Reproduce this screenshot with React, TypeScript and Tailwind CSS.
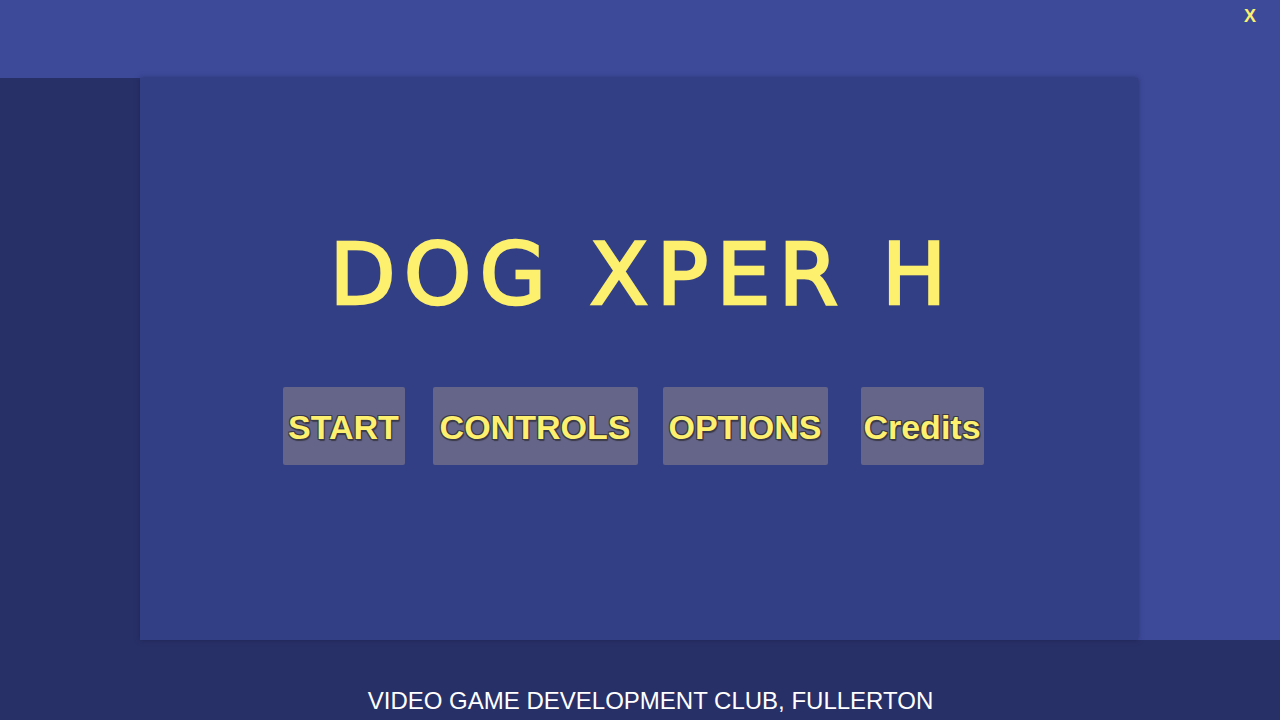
import React from 'react'

const buttons = [
  { label: 'START', w: 'w-[122px]', ml: 'ml-0' },
  { label: 'CONTROLS', w: 'w-[205px]', ml: 'ml-[28px]' },
  { label: 'OPTIONS', w: 'w-[165px]', ml: 'ml-[25px]' },
  { label: 'Credits', w: 'w-[123px]', ml: 'ml-[33px]' },
]

export default function App() {
  return (
    <div className="flex h-[720px] w-[1280px] flex-col overflow-hidden bg-[#283068] font-['Liberation_Sans',Arial,sans-serif]">
      <div className="relative h-[78px] w-full bg-[#3d4a9a]">
        <button className="absolute right-[24px] top-[3px] text-[18px] font-bold text-[#fdf06f]">X</button>
      </div>
      <div className="flex h-[562px] w-full">
        <div className="w-[140px] bg-[#283068]" />
        <div className="z-10 flex w-[998px] flex-col items-center bg-[#333f84] shadow-[0_0_5px_rgba(20,25,60,0.5)]">
          <h1 className="mt-[153px] ml-[6px] font-['DejaVu_Sans',sans-serif] text-[86px] font-normal leading-none tracking-[8px] text-[#fdf06f] [-webkit-text-stroke:2.5px_#fdf06f]">
            DOG XPER H
          </h1>
          <div className="mt-[70px] mr-[12px] flex">
            {buttons.map((b) => (
              <div
                key={b.label}
                className={`${b.w} ${b.ml} flex h-[78px] items-center justify-center rounded-[2px] bg-[#65658a] pt-[2px] text-[34px] font-bold text-[#fdf06f] [text-shadow:1px_1px_0_#3a3a48,-1px_-1px_0_#3a3a48,1px_-1px_0_#3a3a48,-1px_1px_0_#3a3a48,1px_2px_1px_#3a3a48]`}
              >
                {b.label}
              </div>
            ))}
          </div>
        </div>
        <div className="flex-1 bg-[#3d4a9a]" />
      </div>
      <div className="flex flex-1 items-end justify-center pb-[7px] pl-[21px]">
        <span className="text-[24px] leading-none text-white">VIDEO GAME DEVELOPMENT CLUB, FULLERTON</span>
      </div>
    </div>
  )
}
